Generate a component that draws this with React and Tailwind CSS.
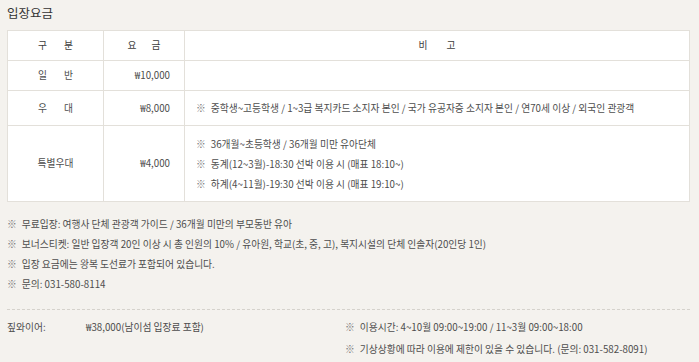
const rows = [
  { label: ["일", "반"], price: "₩10,000", notes: [] },
  {
    label: ["우", "대"],
    price: "₩8,000",
    notes: ["중학생~고등학생 / 1~3급 복지카드 소지자 본인 / 국가 유공자증 소지자 본인 / 연70세 이상 / 외국인 관광객"],
    h: "h-[35px]",
  },
  {
    label: ["특별우대"],
    price: "₩4,000",
    notes: [
      "36개월~초등학생 / 36개월 미만 유아단체",
      "동계(12~3월)-18:30 선박 이용 시 (매표 18:10~)",
      "하계(4~11월)-19:30 선박 이용 시 (매표 19:10~)",
    ],
    h: "h-[76px]",
  },
];

const notes = [
  "무료입장: 여행사 단체 관광객 가이드 / 36개월 미만의 부모동반 유아",
  "보너스티켓: 일반 입장객 20인 이상 시 총 인원의 10% / 유아원, 학교(초, 중, 고), 복지시설의 단체 인솔자(20인당 1인)",
  "입장 요금에는 왕복 도선료가 포함되어 있습니다.",
  "문의: 031-580-8114",
];

function Note({ text }) {
  return (
    <p className="flex leading-[20px]">
      <span className="mr-[5px] text-[#777]">※</span>
      <span>{text}</span>
    </p>
  );
}

export default function App() {
  return (
    <div className="h-[362px] w-[699px] overflow-hidden bg-[#f4f2ee] pl-[7px] pr-[9px] font-['Noto_Sans_CJK_KR',sans-serif] text-[9.75px] text-[#4d4d4d]">
      <h2 className="pt-[4px] text-[12.5px] leading-[18px] text-[#333]">입장요금</h2>

      <table className="mt-[8px] w-[683px] table-fixed border-collapse bg-white">
        <colgroup>
          <col className="w-[96px]" />
          <col className="w-[81px]" />
          <col />
        </colgroup>
        <thead>
          <tr className="h-[30px] text-[#3d3d3d]">
            <th className="border border-[#e3e0da] font-normal">
              <div className="flex justify-center gap-[17px]"><span>구</span><span>분</span></div>
            </th>
            <th className="border border-[#e3e0da] font-normal">
              <div className="flex justify-center gap-[15px]"><span>요</span><span>금</span></div>
            </th>
            <th className="border border-[#e3e0da] font-normal">
              <div className="flex justify-center gap-[19px]"><span>비</span><span>고</span></div>
            </th>
          </tr>
        </thead>
        <tbody>
          {rows.map((r) => (
            <tr key={r.price} className={r.h || "h-[30px]"}>
              <td className="border border-[#e3e0da]">
                <div className="flex justify-center gap-[17px]">
                  {r.label.map((l) => (
                    <span key={l}>{l}</span>
                  ))}
                </div>
              </td>
              <td className="border border-[#e3e0da] pr-[14px] text-right">{r.price}</td>
              <td className="border border-[#e3e0da] pl-[11px]">
                {r.notes.map((n) => (
                  <Note key={n} text={n} />
                ))}
              </td>
            </tr>
          ))}
        </tbody>
      </table>

      <div className="mt-[12px]">
        {notes.map((n) => (
          <Note key={n} text={n} />
        ))}
      </div>

      <div className="mt-[15px] w-[683px] border-t border-dashed border-[#d5d2cc] pt-[6px]">
        <div className="flex">
          <div className="flex w-[338px] leading-[22px]">
            <span className="w-[79px]">짚와이어:</span>
            <span>₩38,000(남이섬 입장료 포함)</span>
          </div>
          <div className="leading-[22px]">
            <p className="flex">
              <span className="mr-[5px] text-[#777]">※</span>
              <span>이용시간: 4~10월 09:00~19:00 / 11~3월 09:00~18:00</span>
            </p>
            <p className="flex">
              <span className="mr-[5px] text-[#777]">※</span>
              <span>기상상황에 따라 이용에 제한이 있을 수 있습니다. (문의: 031-582-8091)</span>
            </p>
          </div>
        </div>
      </div>
    </div>
  );
}
